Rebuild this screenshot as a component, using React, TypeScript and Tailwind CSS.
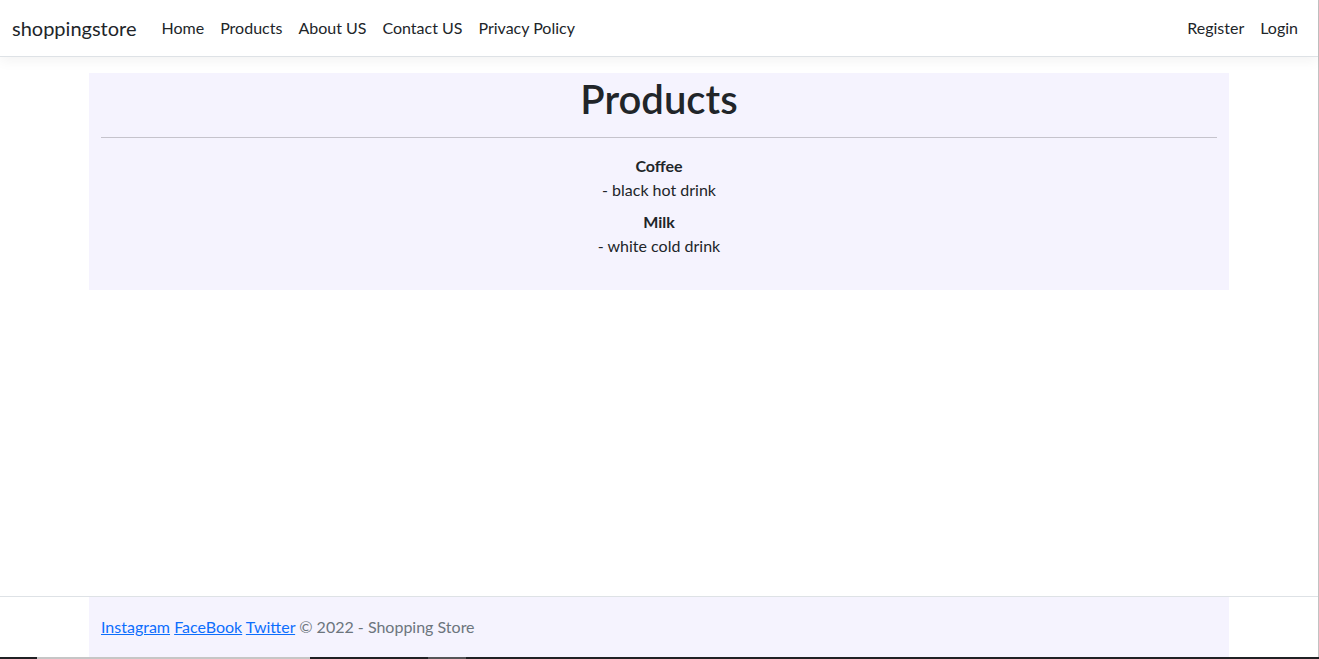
import React from "react";

const navLinks = ["Home", "Products", "About US", "Contact US", "Privacy Policy"];

const products = [
  { name: "Coffee", desc: "black hot drink" },
  { name: "Milk", desc: "white cold drink" },
];

export default function App() {
  return (
    <div className="w-[1319px] h-[659px] flex flex-col overflow-hidden bg-white font-['Lato','Segoe_UI',sans-serif] text-[#212529]">
      <div className="flex-1 flex flex-col border-r border-[#c2c2c2]">
        {/* Navbar */}
        <header className="h-[57px] shrink-0 border-b border-[#dee2e6] shadow-[0_4px_12px_rgba(0,0,0,0.05)] bg-white">
          <nav className="h-14 flex items-center justify-between px-3">
            <div className="flex items-center">
              <a className="text-[20px] leading-[30px] mr-[17px] text-[#212529]">shoppingstore</a>
              <ul className="flex">
                {navLinks.map((l) => (
                  <li key={l}>
                    <a className="block px-2 py-2 text-base leading-6">{l}</a>
                  </li>
                ))}
              </ul>
            </div>
            <ul className="flex">
              <li>
                <a className="block px-2 py-2 text-base leading-6">Register</a>
              </li>
              <li>
                <a className="block px-2 py-2 text-base leading-6">Login</a>
              </li>
            </ul>
          </nav>
        </header>

        {/* Main */}
        <main className="mt-4 mx-auto w-[1140px] bg-[#f5f3fe] px-3 pb-6">
          <h1 className="text-center text-[40px] leading-[52px] font-semibold -mb-1">Products</h1>
          <hr className="my-4 border-0 border-t border-[#c5c3cc]" />
          <dl className="text-center text-base leading-6">
            {products.map((p) => (
              <div key={p.name} className="mb-2">
                <dt className="font-bold">{p.name}</dt>
                <dd>- {p.desc}</dd>
              </div>
            ))}
          </dl>
        </main>

        {/* Footer */}
        <footer className="mt-auto border-t border-[#dee2e6]">
          <div className="mx-auto w-[1140px] bg-[#f5f3fe] px-3 h-[60px] leading-[60px] whitespace-nowrap text-base text-[#6c757d]">
            <a className="text-[#0d6efd] underline">Instagram</a>{" "}
            <a className="text-[#0d6efd] underline">FaceBook</a>{" "}
            <a className="text-[#0d6efd] underline">Twitter</a> &copy; 2022 - Shopping Store
          </div>
        </footer>
      </div>

      {/* bottom strip */}
      <div className="h-[2px] shrink-0 flex bg-[#202124]">
        <div className="w-[37px]" />
        <div className="w-[273px] bg-[#c6c6c6]" />
        <div className="w-[118px]" />
        <div className="w-[38px] bg-[#555558]" />
      </div>
    </div>
  );
}
